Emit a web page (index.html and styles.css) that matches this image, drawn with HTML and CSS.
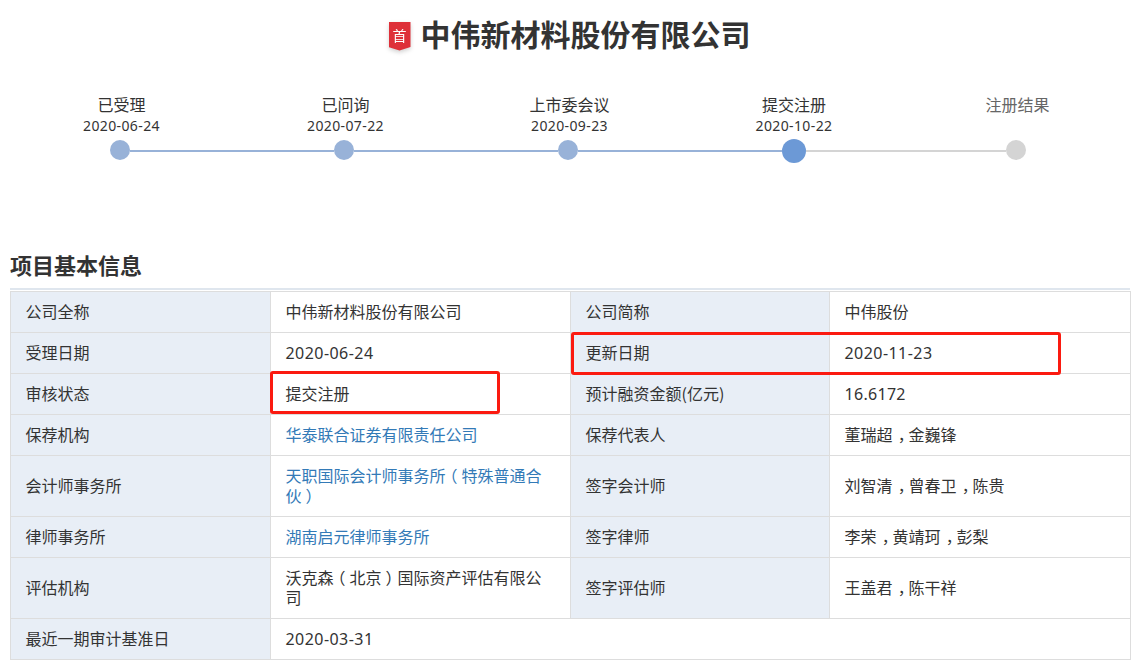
FILE: index.html
```html
<!DOCTYPE html>
<html lang="zh-CN">
<head>
<meta charset="utf-8">
<title>中伟新材料股份有限公司</title>
<link rel="stylesheet" href="styles.css">
</head>
<body>
<header class="title-row">
  <span class="badge-wrap"><span class="badge">首</span></span>
  <h1 class="company">中伟新材料股份有限公司</h1>
</header>
<section class="progress">
  <div class="labels">
    <div class="label done"><div>已受理</div><div class="date">2020-06-24</div></div>
    <div class="label done"><div>已问询</div><div class="date">2020-07-22</div></div>
    <div class="label done"><div>上市委会议</div><div class="date">2020-09-23</div></div>
    <div class="label done wide"><div>提交注册</div><div class="date">2020-10-22</div></div>
    <div class="label todo narrow"><div>注册结果</div></div>
  </div>
  <div class="track">
    <span class="dot passed"></span><span class="line passed-line"></span>
    <span class="dot passed"></span><span class="line passed-line"></span>
    <span class="dot passed"></span><span class="line passed-line"></span>
    <span class="dot current"></span><span class="line pending-line"></span>
    <span class="dot pending"></span>
  </div>
</section>
<section class="info">
  <h2 class="info-title">项目基本信息</h2>
  <div class="table-wrap">
    <table class="info-table">
      <colgroup><col class="c1"><col class="c2"><col class="c3"><col class="c4"></colgroup>
      <tr><th>公司全称</th><td>中伟新材料股份有限公司</td><th>公司简称</th><td>中伟股份</td></tr>
      <tr><th>受理日期</th><td class="num">2020-06-24</td><th>更新日期</th><td class="num">2020-11-23</td></tr>
      <tr><th>审核状态</th><td>提交注册</td><th>预计融资金额(亿元)</th><td class="num short">16.6172</td></tr>
      <tr><th>保荐机构</th><td><a href="#">华泰联合证券有限责任公司</a></td><th>保荐代表人</th><td>董瑞超<span class="comma">，</span>金巍锋</td></tr>
      <tr><th>会计师事务所</th><td><a href="#">天职国际会计师事务所<span class="paren-open">（</span>特殊普通合伙<span class="paren-close">）</span></a></td><th>签字会计师</th><td>刘智清<span class="comma">，</span>曾春卫<span class="comma">，</span>陈贵</td></tr>
      <tr><th>律师事务所</th><td><a href="#">湖南启元律师事务所</a></td><th>签字律师</th><td>李荣<span class="comma">，</span>黄靖珂<span class="comma">，</span>彭梨</td></tr>
      <tr><th>评估机构</th><td>沃克森<span class="paren-open">（</span>北京<span class="paren-close">）</span>国际资产评估有限公司</td><th>签字评估师</th><td>王盖君<span class="comma">，</span>陈干祥</td></tr>
      <tr><th>最近一期审计基准日</th><td class="num" colspan="3">2020-03-31</td></tr>
    </table>
    <div class="mark mark-status"></div>
    <div class="mark mark-update"></div>
  </div>
</section>
</body>
</html>
```
FILE: styles.css
```css
* { box-sizing: border-box; }
html, body { margin: 0; padding: 0; background: #fff; }
body {
  width: 1139px;
  height: 670px;
  overflow: hidden;
  color: #333;
  font-family: "Noto Sans CJK SC", "Noto Sans", sans-serif;
  font-size: 16px;
}
.title-row {
  display: flex;
  justify-content: center;
  align-items: center;
  gap: 10px;
  height: 66px;
}
.badge-wrap {
  display: block;
  margin-top: 6px;
  filter: drop-shadow(0 2px 2px rgba(0, 0, 0, .18));
}
.badge {
  display: block;
  width: 22px;
  height: 29px;
  padding-top: 2px;
  text-align: center;
  color: #fff;
  font-size: 14px;
  line-height: 22px;
  background: #de3039;
  clip-path: polygon(0 0, 100% 0, 100% 88%, 50% 100%, 0 88%);
}
.company {
  margin: 0;
  font-size: 30px;
  line-height: 40px;
  font-weight: 700;
  color: #333;
}
.progress { padding: 28px 0 0 9.5px; height: 188px; }
.labels { display: flex; }
.label {
  width: 224px;
  text-align: center;
  font-size: 16px;
  line-height: 21px;
  height: 45px;
}
.label.wide { width: 225px; }
.label.narrow { width: 222px; }
.label.todo { color: #666; }
.date { font-family: "Noto Sans", sans-serif; font-size: 14px; letter-spacing: .38px; }
.track { display: flex; align-items: center; margin-left: -1.5px; padding-left: 102px; height: 24px; }
.dot { flex: none; border-radius: 50%; width: 20px; height: 20px; margin-bottom: 2px; }
.dot.passed { background: #98b2d8; }
.dot.current { background: #6c99d6; width: 24px; height: 24px; margin-bottom: 0; }
.dot.pending { background: #d4d4d4; }
.line { flex: none; height: 2px; width: 204px; }
.line.passed-line { background: #98b2d8; }
.line.pending-line { background: #d4d4d4; width: 200px; }
.info { padding: 0 9px 0 10px; }
.info-title {
  margin: 0;
  font-size: 22px;
  line-height: 20px;
  font-weight: 700;
  height: 36px;
  border-bottom: 2px solid #dfe6ee;
  color: #333;
}
.table-wrap { position: relative; margin-top: 1px; }
.info-table {
  width: 1120px;
  margin-left: -0.5px;
  table-layout: fixed;
  border-collapse: collapse;
  font-size: 16px;
  line-height: 20px;
}
.c1 { width: 260px; }
.c2 { width: 300px; }
.c3 { width: 259px; }
.c4 { width: 301px; }
.info-table th, .info-table td {
  border: 1px solid #ddd;
  padding: 9px 15px 11px;
  text-align: left;
  font-weight: 400;
  vertical-align: middle;
}
.info-table th { background: #e8eef6; }
.info-table td.num { font-family: "Noto Sans", sans-serif; letter-spacing: .45px; padding-top: 10px; padding-bottom: 10px; }
.info-table td.num.short { letter-spacing: .3px; }
.info-table a { color: #337ab7; text-decoration: none; }
.comma { display: inline-block; width: 1em; transform: translateX(.32em); }
.paren-open { display: inline-block; width: 1em; transform: translateX(-.25em); }
.paren-close { display: inline-block; width: 1em; transform: translateX(.25em); }
.mark {
  position: absolute;
  border: 3px solid #fb1a10;
  border-radius: 3px;
  pointer-events: none;
}
.mark-status { left: 260px; top: 80px; width: 230px; height: 43px; }
.mark-update { left: 561px; top: 41px; width: 490px; height: 43px; }
```
